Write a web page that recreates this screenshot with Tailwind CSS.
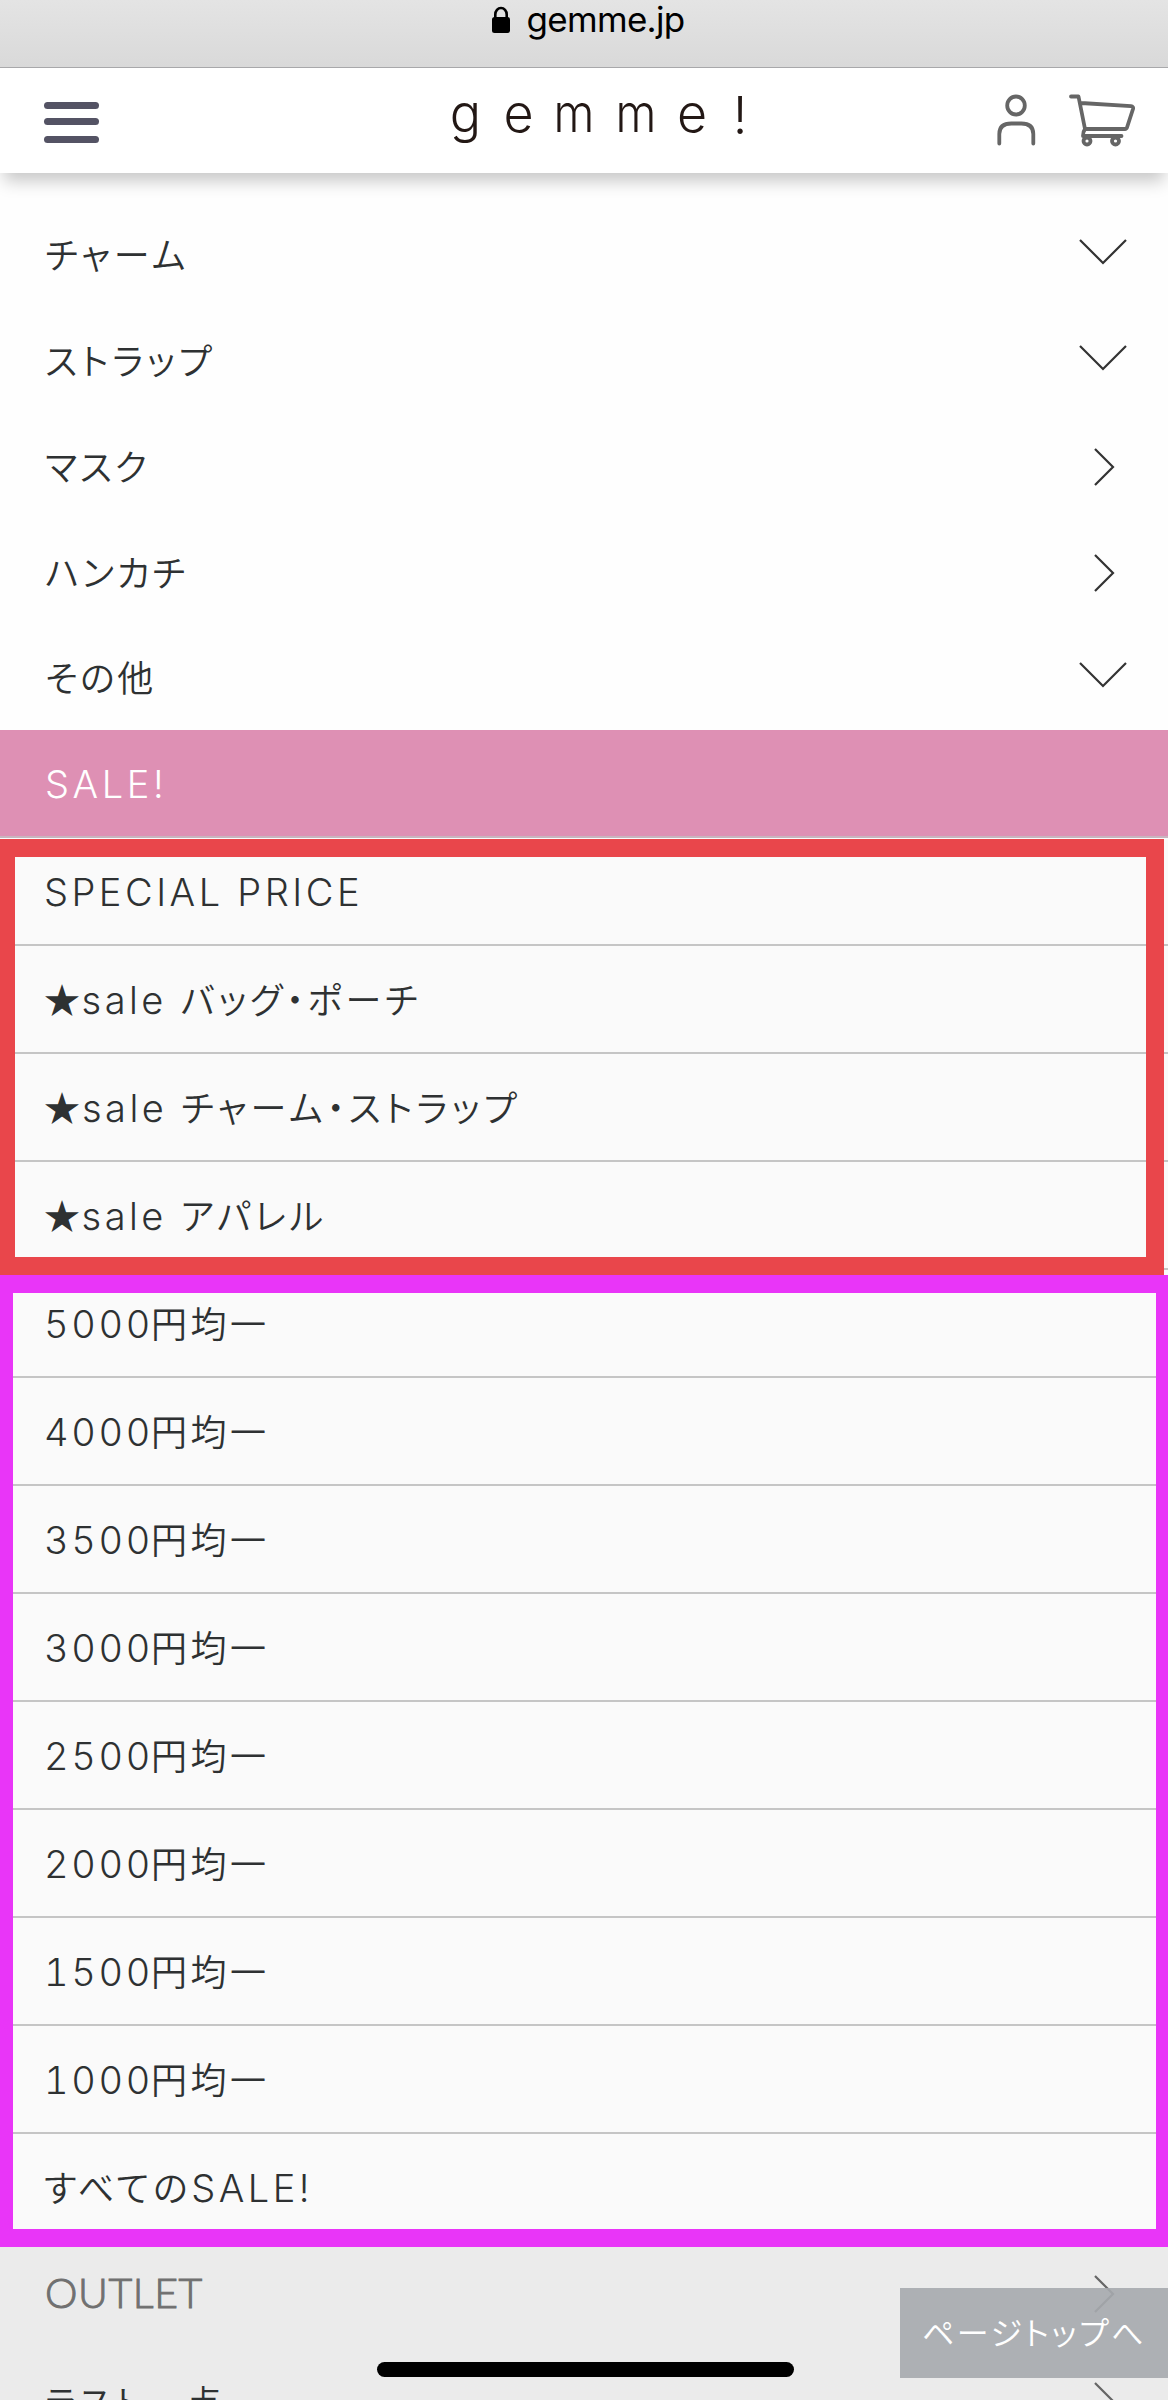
<!DOCTYPE html>
<html lang="ja">
<head>
<meta charset="utf-8">
<title>gemme!</title>
<script src="https://cdn.jsdelivr.net/npm/@tailwindcss/browser@4"></script>
</head>
<body class="relative w-[1168px] h-[2400px] overflow-hidden bg-[#fefefe] font-['Noto_Sans_CJK_JP',sans-serif] font-[350] text-[36px] tracking-[3.5px] text-[#2e3132] leading-none whitespace-nowrap [font-feature-settings:'palt']">

<!-- browser bar -->
<div class="flex h-[68px] justify-center border-b border-[#a9a9ab] bg-linear-to-b from-[#e4e4e4] to-[#d9d9d9] pl-[8px] text-black">
  <svg class="mt-[6px] mr-[17px] h-[28px] w-[18px]" viewBox="0 0 18 28"><rect y="11" width="18" height="16" rx="2.5"/><path d="M3.300 13V8.500a5.700 6.500 0 0 1 11.400 0V13" fill="none" stroke="#000" stroke-width="2.600"/></svg>
  <span class="font-['Inter',sans-serif] font-normal text-[35px] leading-[38px] tracking-[-0.7px]">gemme.jp</span>
</div>

<!-- site header -->
<header class="relative z-10 flex h-[105px] bg-white pl-[44px] shadow-[0_12px_16px_-4px_rgba(0,0,0,0.22)]">
  <div class="mt-[34px] flex h-[41px] w-[55px] flex-col justify-between">
    <div class="h-[7px] rounded-full bg-[#545364]"></div>
    <div class="mb-[2px] h-[7px] rounded-full bg-[#545364]"></div>
    <div class="h-[7px] rounded-full bg-[#545364]"></div>
  </div>
  <div class="ml-[340px] mt-[14px] flex font-['Inter',sans-serif] font-[260] text-[52px] leading-[64px] tracking-normal text-[#231815] text-center">
    <span class="w-[53px]">g</span><span class="w-[53px]">e</span><span class="w-[58px] scale-x-[.9]">m</span><span class="w-[66px] scale-x-[.9]">m</span><span class="w-[46px]">e</span><span class="mt-[2px] w-[50px]">!</span>
  </div>
  <svg class="ml-[231px] mt-[26px] h-[54px] w-[40px]" viewBox="0 0 40 54" fill="none" stroke="#666" stroke-width="3.800" stroke-linecap="round"><ellipse cx="20" cy="11.500" rx="8.800" ry="9"/><path d="M3.300 49.500V40q0-10.500 12-10.500h10q12 0 12 10.500v9.500"/></svg>
  <svg class="ml-[33px] mt-[26px] h-[54px] w-[66px]" viewBox="0 0 66 54" fill="none" stroke="#666" stroke-width="3.800" stroke-linecap="round" stroke-linejoin="round"><path d="M2 2.500h7.500L16 35h40q1.500 0 2-1.500L64 15q.6-2.500-2-2.800L12 9M16 35q-2 2.500-2 7h38.500"/><circle cx="18" cy="47" r="3.500"/><circle cx="46.500" cy="47" r="3.500"/></svg>
</header>

<!-- category list -->
<ul class="pt-[29px]">
  <li class="flex h-[106px] items-center justify-between pl-[45px] pr-[41px]"><span class="-mt-[4px]">チャーム</span><svg class="-mt-[7px] h-[26px] w-[48px]" viewBox="0 0 48 26" fill="none" stroke="#333" stroke-width="2.200"><path d="M1 1l23 23L47 1"/></svg></li>
  <li class="flex h-[106px] items-center justify-between pl-[45px] pr-[41px]"><span class="-mt-[4px]">ストラップ</span><svg class="-mt-[7px] h-[26px] w-[48px]" viewBox="0 0 48 26" fill="none" stroke="#333" stroke-width="2.200"><path d="M1 1l23 23L47 1"/></svg></li>
  <li class="flex h-[105px] items-center justify-between pl-[45px] pr-[52px]"><span class="-mt-[4px] tracking-[2.500px]">マスク</span><svg class="mt-[1px] h-[38px] w-[22px]" viewBox="0 0 22 38" fill="none" stroke="#333" stroke-width="2.200"><path d="M1 1l18 18L1 37"/></svg></li>
  <li class="flex h-[106px] items-center justify-between pl-[45px] pr-[52px]"><span class="-mt-[3px] tracking-[2.500px]">ハンカチ</span><svg class="mt-[1px] h-[38px] w-[22px]" viewBox="0 0 22 38" fill="none" stroke="#333" stroke-width="2.200"><path d="M1 1l18 18L1 37"/></svg></li>
  <li class="flex h-[105px] items-center justify-between pl-[45px] pr-[41px]"><span class="-mt-[4px] tracking-[2.500px]">その他</span><svg class="-mt-[6px] h-[26px] w-[48px]" viewBox="0 0 48 26" fill="none" stroke="#333" stroke-width="2.200"><path d="M1 1l23 23L47 1"/></svg></li>
</ul>

<div class="flex h-[108px] items-center border-b-2 border-[#c8b4be] bg-[#de90b4] pt-[2px] pl-[45px] font-['Inter',sans-serif] font-light text-[38px] tracking-[3.600px] text-white">SALE!</div>

<!-- sale submenu -->
<ul class="bg-[#fafafa] *:flex *:h-[108px] *:items-center *:border-b-2 *:border-[#c5c5c5] *:pl-[44px] *:pb-[3px] [&_b]:mt-[4px] [&_b]:font-['Inter'] [&_b]:font-[330] [&_b]:text-[38px] [&_b]:whitespace-pre [&_b]:tabular-nums">
  <li><b>SPECIAL PRICE</b></li>
  <li>★<b class="-ml-[2px]">sale </b>バッグ・ポーチ</li>
  <li class="tracking-[3.900px]">★<b class="-ml-[2px] tracking-[3.500px]">sale </b>チャーム・ストラップ</li>
  <li>★<b class="-ml-[2px]">sale </b>アパレル</li>
  <li><b class="w-[107px] tracking-[2.700px]">5000</b>円均一</li>
  <li><b class="w-[107px] tracking-[2.700px]">4000</b>円均一</li>
  <li><b class="w-[107px] tracking-[2.700px]">3500</b>円均一</li>
  <li><b class="w-[107px] tracking-[2.700px]">3000</b>円均一</li>
  <li><b class="w-[107px] tracking-[2.700px]">2500</b>円均一</li>
  <li><b class="w-[107px] tracking-[2.700px]">2000</b>円均一</li>
  <li><b class="w-[107px] tracking-[2.700px]">1500</b>円均一</li>
  <li><b class="w-[107px] tracking-[2.700px]">1000</b>円均一</li>
  <li>すべての<b>SALE!</b></li>
</ul>

<!-- bottom rows -->
<div class="h-[158px] bg-[#ebebeb]">
  <div class="flex h-[106px] items-center justify-between pl-[45px] pr-[52px]"><span class="-mt-[6px] font-['Lato',sans-serif] font-light text-[41px] tracking-[0.600px] text-[#707070] [-webkit-text-stroke:1px_#707070]">OUTLET</span><svg class="-mt-[2px] h-[38px] w-[22px]" viewBox="0 0 22 38" fill="none" stroke="#666" stroke-width="2.200"><path d="M1 1l18 18L1 37"/></svg></div>
  <div class="flex h-[106px] items-center justify-between pl-[45px] pr-[52px]"><span>ラスト一点</span><svg class="h-[38px] w-[22px]" viewBox="0 0 22 38" fill="none" stroke="#666" stroke-width="2.200"><path d="M1 1l18 18L1 37"/></svg></div>
</div>

<!-- highlight frames -->
<div class="absolute left-0 top-[839px] h-[436px] w-[1164px] border-[18px] border-l-[15px] border-[#e9464b]"></div>
<div class="absolute left-0 top-[1275px] h-[972px] w-[1168px] border-x-[13px] border-r-[12px] border-y-[18px] border-[#e935f8]"></div>

<!-- page-top button and home indicator -->
<div class="absolute left-[900px] top-[2288px] flex h-[90px] w-[268px] items-center bg-[#a6aaae]/90 pb-[5px] pl-[22px] text-[32px] tracking-[2.500px] text-white">ページトップへ</div>
<div class="absolute left-[377px] top-[2362px] h-[15px] w-[417px] rounded-full bg-black"></div>
</body>
</html>
